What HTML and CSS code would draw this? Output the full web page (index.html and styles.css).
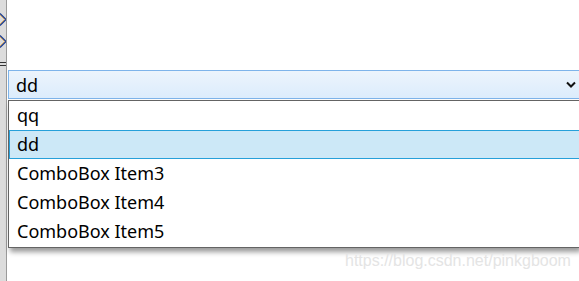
FILE: index.html
```html
<!DOCTYPE html>
<html>

<head>
    <meta name="viewport" content="width=device-width,initial-scale=1.0">
    <title>ComboBox</title>
    <link rel="stylesheet" href="styles.css">
</head>

<body>
    <div class="page">
        <div class="side">
            <div class="arrows">
                <svg class="chev" width="7" height="13" viewBox="0 0 7 13"><path d="M0 0.5 L6 6.5 L0 12.5" fill="none" stroke="#1f3f8f" stroke-width="1.3"/><path d="M0 2 L4.5 6.5 L0 11" fill="none" stroke="#e0a040" stroke-width="0.8"/></svg>
                <svg class="chev" width="7" height="13" viewBox="0 0 7 13"><path d="M0 0.5 L6 6.5 L0 12.5" fill="none" stroke="#1f3f8f" stroke-width="1.3"/><path d="M0 2 L4.5 6.5 L0 11" fill="none" stroke="#e0a040" stroke-width="0.8"/></svg>
            </div>
            <div class="rules"></div>
        </div>

        <div class="main">
            <div class="combo">
                <span>dd</span>
                <svg width="10" height="7" viewBox="0 0 10 7"><path d="M1 1.5 L5 5.5 L9 1.5" fill="none" stroke="#111" stroke-width="2"/></svg>
            </div>
            <ul class="list">
                <li>qq</li>
                <li class="active">dd</li>
                <li>ComboBox Item3</li>
                <li>ComboBox Item4</li>
                <li>ComboBox Item5</li>
            </ul>
        </div>

        <div class="mark">https://blog.csdn.net/pinkgboom</div>
    </div>
</body>

</html>
```

FILE: styles.css
```css
body {
    margin: 0;
    background: #fff;
    font-family: "Noto Sans", "Liberation Sans", sans-serif;
    overflow: hidden;
}

.page {
    position: relative;
    display: flex;
    height: 281px;
}

.side {
    width: 6px;
    flex-shrink: 0;
    background: #dcdcdc;
    border-right: 1px solid #9a9a9a;
    overflow: hidden;
}

.arrows {
    display: flex;
    flex-direction: column;
    gap: 9px;
    padding-top: 13px;
}

.chev {
    display: block;
}

.rules {
    margin-top: 14px;
    height: 2px;
    border-top: 1px solid #333;
    border-bottom: 1px solid #333;
}

.main {
    flex-grow: 1;
    padding-top: 70px;
    padding-left: 1px;
}

.combo {
    display: flex;
    align-items: center;
    justify-content: space-between;
    height: 27px;
    padding: 0 3px 0 7px;
    border: 1px solid #7eb4ea;
    border-right: none;
    background: linear-gradient(#ecf4fc, #dcecfc);
    font-size: 18px;
    color: #000;
}

.list {
    list-style: none;
    margin: 1px 0 0;
    padding: 0 0 1px;
    border: 1px solid #646464;
    border-right: none;
    box-shadow: 2px 4px 5px rgba(0, 0, 0, 0.4);
}

.list>li {
    height: 27px;
    line-height: 27px;
    padding-left: 7px;
    border: 1px solid transparent;
    border-right: none;
    font-size: 18px;
    color: #000;
}

.list>li.active {
    background: #cce8f7;
    border-color: #26a0da;
}

.mark {
    position: absolute;
    left: 345px;
    top: 252px;
    font-family: "Liberation Sans", sans-serif;
    font-size: 16px;
    color: #e4e4e4;
}
```
